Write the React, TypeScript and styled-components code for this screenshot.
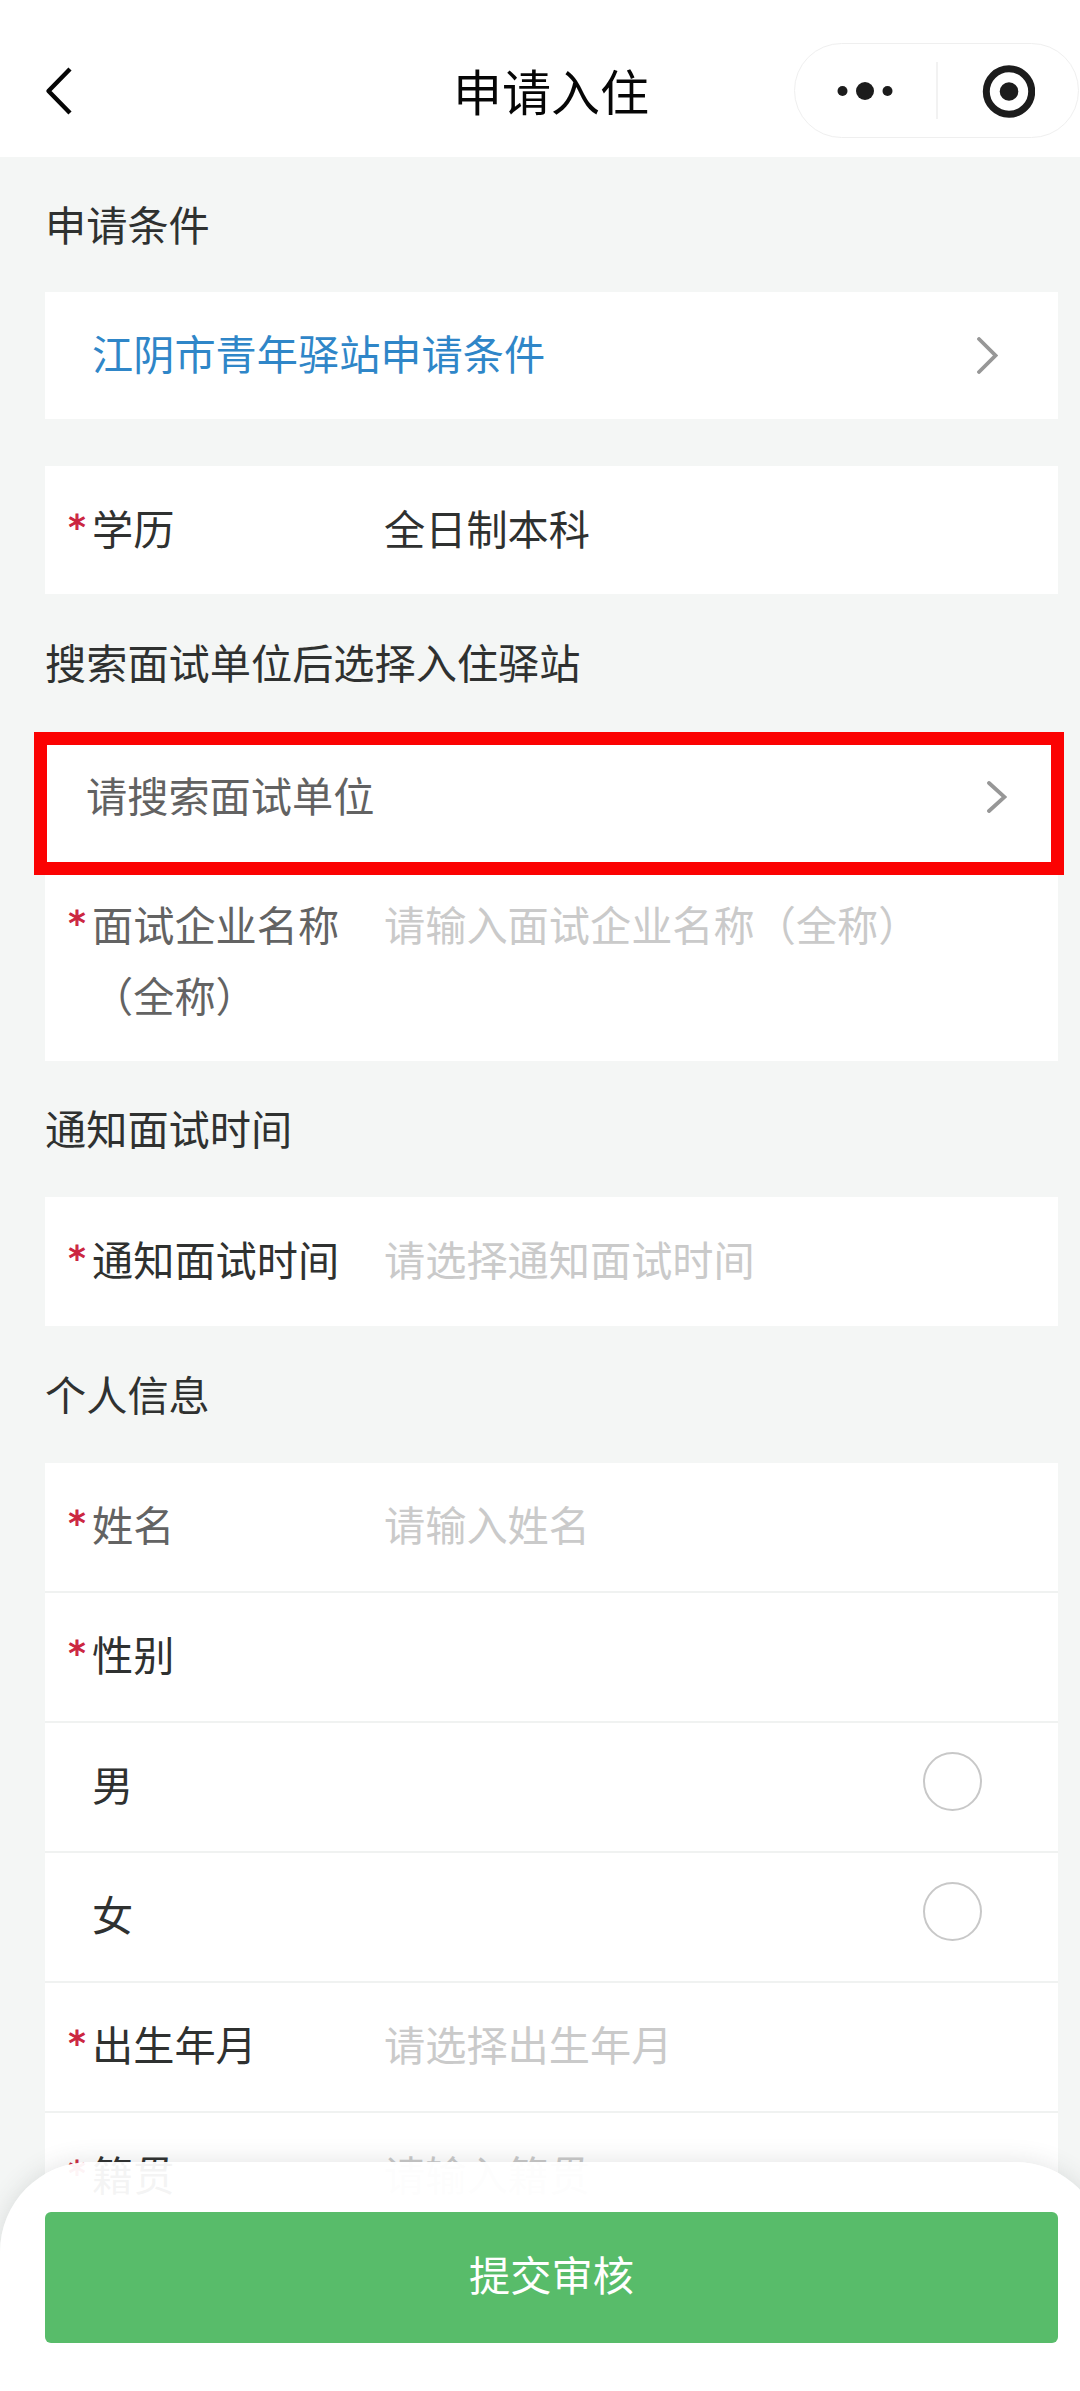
import React from 'react';
import styled, { createGlobalStyle } from 'styled-components';

const GlobalStyle = createGlobalStyle`
  *, *::before, *::after { box-sizing: border-box; }
  body {
    margin: 0;
    background: #f4f6f5;
    font-family: "Noto Sans CJK SC", "Noto Sans", sans-serif;
    font-size: 41.2px;
    color: #2f3130;
  }
`;

const Page = styled.div`
  position: relative;
  width: 1080px;
  height: 2391px;
  overflow: hidden;
  background: #f4f6f5;
`;

const NavBar = styled.header`
  display: grid;
  grid-template-columns: 286px 1fr 286px;
  align-items: center;
  height: 157px;
  padding: 25px 0 0;
  background: #fff;
`;

const BackButton = styled.button`
  display: flex;
  align-items: center;
  padding: 0 0 0 44px;
  border: 0;
  background: none;
`;

const NavTitle = styled.h1`
  margin: 0;
  padding: 0 0 3px 22px;
  font-size: 49px;
  font-weight: 400;
  line-height: 72px;
  text-align: center;
  color: #060606;
`;

const Capsule = styled.div`
  display: grid;
  grid-template-columns: 1fr 2px 1fr;
  align-items: center;
  justify-items: center;
  width: 285px;
  height: 95px;
  margin-bottom: 1px;
  border: 1.5px solid #efefef;
  border-radius: 48px;
`;

const CapsuleDivider = styled.span`
  width: 2px;
  height: 57px;
  background: #f2f2f2;
`;

const SectionTitle = styled.h2<{ $height: number }>`
  display: flex;
  align-items: center;
  height: ${(p) => p.$height}px;
  margin: 0;
  padding: 0 45px 4px;
  font-size: inherit;
  font-weight: 400;
`;

const Card = styled.section<{ $spaced?: boolean }>`
  position: relative;
  margin: ${(p) => (p.$spaced ? 47 : 0)}px 22px 0 45px;
  background: #fff;
`;

const Row = styled.div<{ $height: number; $divided?: boolean; $inset?: number; $end?: number }>`
  display: flex;
  align-items: center;
  height: ${(p) => p.$height}px;
  padding: 0 ${(p) => p.$end ?? 58}px ${(p) => (p.$divided ? 7 : 5)}px ${(p) => p.$inset ?? 47}px;
  border-bottom: ${(p) => (p.$divided ? '2px solid #f0f2f1' : '0')};
  line-height: 71.5px;

  > svg {
    position: relative;
    top: 2px;
  }
`;

const FieldLabel = styled.label<{ $muted?: boolean }>`
  position: relative;
  align-self: center;
  flex: 0 0 292px;
  padding-right: 40px;
  white-space: nowrap;
  color: ${(p) => (p.$muted ? '#636363' : '#2f3130')};
`;

const Required = styled.span`
  position: absolute;
  left: -23.5px;
  top: 0;
  color: #cb2440;
  font-family: "DejaVu Sans", sans-serif;
  font-size: 34px;
  -webkit-text-stroke: 1px #cb2440;
`;

const FieldText = styled.span<{ $placeholder?: boolean }>`
  align-self: flex-start;
  margin-top: var(--text-top);
  white-space: nowrap;
  color: ${(p) => (p.$placeholder ? '#cacaca' : '#2f3130')};
`;

const FieldRow = styled(Row)`
  --text-top: ${(p) => (p.$height > 150 ? 26 : (p.$height - (p.$divided ? 9 : 5) - 71.5) / 2)}px;
`;

const LinkText = styled.a`
  flex: 1;
  color: #2f86c8;
`;

const SearchText = styled.span`
  flex: 1;
  color: #626262;
`;

const OptionText = styled.span`
  flex: 1;
`;

const Radio = styled.span`
  width: 59px;
  height: 59px;
  margin-bottom: 4px;
  border: 2.5px solid #c8c8c8;
  border-radius: 50%;
`;

const Highlight = styled.div`
  position: absolute;
  left: -11px;
  top: 0;
  width: 1030px;
  height: 143px;
  border: 13px solid #fb0202;
`;

const Footer = styled.footer`
  position: absolute;
  left: 0;
  bottom: 0;
  width: 1105px;
  height: 229px;
  padding: 50px 47px 0 45px;
  border-radius: 90px 90px 0 0;
  background: rgba(255, 255, 255, 0.95);
  box-shadow: 0 0 24px rgba(60, 70, 65, 0.15);
`;

const SubmitButton = styled.button`
  display: block;
  width: 1013px;
  height: 131px;
  padding: 0 0 10px;
  border: 0;
  border-radius: 6px;
  background: #58bc6a;
  color: #fff;
  font: inherit;
  text-align: center;
`;

function Chevron({ width, height }: { width: number; height: number }) {
  return (
    <svg width={width} height={height} viewBox={`0 0 ${width} ${height}`} fill="none">
      <path
        d={`M2 2L${width - 2.5} ${height / 2}L2 ${height - 2}`}
        stroke="#979797"
        strokeWidth="3.8"
        strokeLinecap="round"
      />
    </svg>
  );
}

interface FieldProps {
  label: React.ReactNode;
  text?: string;
  filled?: boolean;
  muted?: boolean;
  height?: number;
  divided?: boolean;
}

function Field({ label, text, filled, muted, height = 130, divided }: FieldProps) {
  return (
    <FieldRow $height={height} $divided={divided}>
      <FieldLabel $muted={muted}>
        <Required>*</Required>
        {label}
      </FieldLabel>
      {text && <FieldText $placeholder={!filled}>{text}</FieldText>}
    </FieldRow>
  );
}

function Option({ text, height }: { text: string; height: number }) {
  return (
    <Row $height={height} $divided $end={76}>
      <OptionText>{text}</OptionText>
      <Radio />
    </Row>
  );
}

export default function App() {
  return (
    <Page>
      <GlobalStyle />
      <NavBar>
        <BackButton aria-label="返回">
          <svg width="30" height="50" viewBox="0 0 30 50" fill="none">
            <path d="M26 3L4.5 25L26 47" stroke="#060606" strokeWidth="4.4" strokeLinejoin="round" />
          </svg>
        </BackButton>
        <NavTitle>申请入住</NavTitle>
        <Capsule>
          <svg width="60" height="20" viewBox="0 0 60 20" fill="#1c1c1c">
            <circle cx="7.5" cy="10" r="5" />
            <circle cx="30" cy="10" r="9" />
            <circle cx="52.5" cy="10" r="5" />
          </svg>
          <CapsuleDivider />
          <svg width="54" height="54" viewBox="0 0 54 54">
            <circle cx="28" cy="27.5" r="22.7" fill="none" stroke="#1c1c1c" strokeWidth="7" />
            <circle cx="28" cy="27.5" r="9.3" fill="#1c1c1c" />
          </svg>
        </Capsule>
      </NavBar>

      <SectionTitle $height={135}>申请条件</SectionTitle>
      <Card>
        <Row $height={127} $end={60}>
          <LinkText>江阴市青年驿站申请条件</LinkText>
          <Chevron width={21} height={37} />
        </Row>
      </Card>
      <Card $spaced>
        <Field label="学历" text="全日制本科" filled height={128} />
      </Card>

      <SectionTitle $height={138}>搜索面试单位后选择入住驿站</SectionTitle>
      <Card>
        <Row $height={130} $inset={41} $end={51}>
          <SearchText>请搜索面试单位</SearchText>
          <Chevron width={20} height={32} />
        </Row>
        <Field
          label={<>面试企业名称<br />（全称）</>}
          text="请输入面试企业名称（全称）"
          muted
          height={199}
        />
        <Highlight />
      </Card>

      <SectionTitle $height={136}>通知面试时间</SectionTitle>
      <Card>
        <Field label="通知面试时间" text="请选择通知面试时间" height={129} />
      </Card>

      <SectionTitle $height={137}>个人信息</SectionTitle>
      <Card>
        <Field label="姓名" text="请输入姓名" muted divided />
        <Field label="性别" divided />
        <Option text="男" height={130} />
        <Option text="女" height={130} />
        <Field label="出生年月" text="请选择出生年月" divided />
        <Field label="籍贯" text="请输入籍贯" divided />
      </Card>

      <Footer>
        <SubmitButton>提交审核</SubmitButton>
      </Footer>
    </Page>
  );
}
